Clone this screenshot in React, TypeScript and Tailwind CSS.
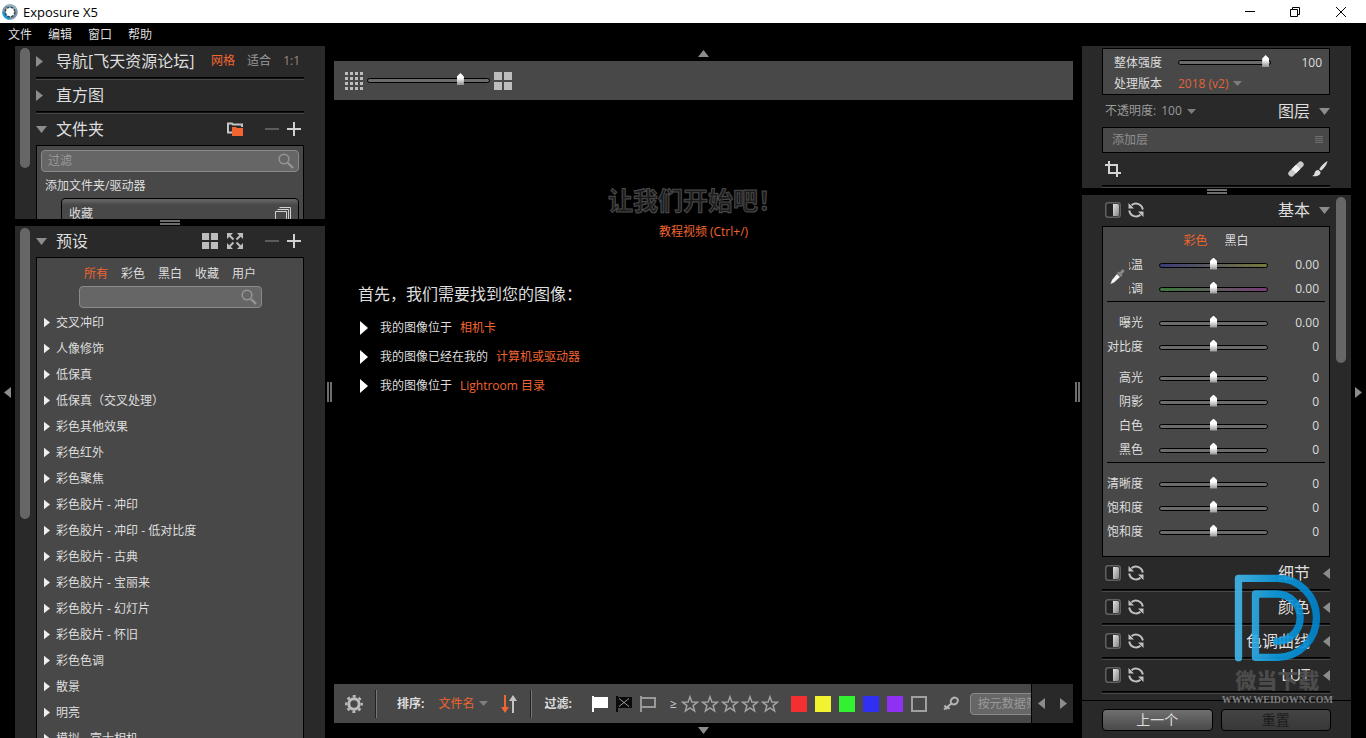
import type { ReactNode } from 'react';

const presets = [
  '交叉冲印',
  '人像修饰',
  '低保真',
  '低保真（交叉处理）',
  '彩色其他效果',
  '彩色红外',
  '彩色聚焦',
  '彩色胶片 - 冲印',
  '彩色胶片 - 冲印 - 低对比度',
  '彩色胶片 - 古典',
  '彩色胶片 - 宝丽来',
  '彩色胶片 - 幻灯片',
  '彩色胶片 - 怀旧',
  '彩色色调',
  '散景',
  '明亮',
  '模拟 - 富士相机',
];

const swatches = [
  { name: '红', color: 'bg-[#f23030]' },
  { name: '黄', color: 'bg-[#f2f230]' },
  { name: '绿', color: 'bg-[#30f230]' },
  { name: '蓝', color: 'bg-[#3030f2]' },
  { name: '紫', color: 'bg-[#9030f2]' },
  { name: '无', color: 'border-2 border-[#a0a0a0]' },
];

const grayTrack = '[&::-webkit-slider-runnable-track]:bg-[#6b6b6b]';

type Tri = 'left' | 'right' | 'up' | 'down';

const triPoints: Record<Tri, string> = {
  left: '7,0 7,11 0,5.5',
  right: '0,0 0,11 7,5.5',
  up: '0,7 11,7 5.5,0',
  down: '0,0 11,0 5.5,7',
};

function Triangle({ dir, className = '' }: { dir: Tri; className?: string }) {
  const flat = dir === 'up' || dir === 'down';
  return (
    <svg
      viewBox={flat ? '0 0 11 7' : '0 0 7 11'}
      className={`shrink-0 fill-[#8c8c8c] ${flat ? 'w-[11px] h-[7px]' : 'w-[7px] h-[11px]'} ${className}`}
    >
      <polygon points={triPoints[dir]} />
    </svg>
  );
}

function Caret() {
  return (
    <svg viewBox="0 0 9 5" className="w-[9px] h-[5px] shrink-0 fill-[#7d7d7d]">
      <polygon points="0,0 9,0 4.5,5" />
    </svg>
  );
}

function Groove() {
  return <div className="h-[3px] shrink-0 border-y border-t-black border-b-[#484848] bg-[#101010]" />;
}

function Slider({ label, value, track = grayTrack, className = '' }: { label: string; value: number; track?: string; className?: string }) {
  return (
    <input
      type="range"
      aria-label={label}
      defaultValue={value}
      className={`appearance-none bg-transparent block h-[13px] shrink-0 [&::-webkit-slider-runnable-track]:h-[5px] [&::-webkit-slider-runnable-track]:rounded-[3px] [&::-webkit-slider-runnable-track]:border [&::-webkit-slider-runnable-track]:border-black [&::-webkit-slider-thumb]:appearance-none [&::-webkit-slider-thumb]:w-[7px] [&::-webkit-slider-thumb]:h-[12px] [&::-webkit-slider-thumb]:-mt-[6px] [&::-webkit-slider-thumb]:bg-linear-to-b [&::-webkit-slider-thumb]:from-white [&::-webkit-slider-thumb]:from-40% [&::-webkit-slider-thumb]:to-[#909090] [&::-webkit-slider-thumb]:[clip-path:polygon(50%_0,100%_30%,100%_100%,0_100%,0_30%)] ${track} ${className}`}
    />
  );
}

function SearchIcon() {
  return (
    <svg viewBox="0 0 16 16" className="w-4 h-4 shrink-0" fill="none" stroke="#959595">
      <circle cx="6" cy="6" r="4.8" strokeWidth="1.5" />
      <path d="M10 10l5 5" strokeWidth="2.4" />
    </svg>
  );
}

function SearchBox({ label, placeholder, className = '' }: { label: string; placeholder?: string; className?: string }) {
  return (
    <div className={`flex items-center h-[22px] pl-[6px] pr-1 rounded border border-[#8a8a8a] bg-[#666] ${className}`}>
      <input
        aria-label={label}
        placeholder={placeholder}
        className="flex-1 min-w-0 bg-transparent outline-none placeholder:text-[#9a9a9a]"
      />
      <SearchIcon />
    </div>
  );
}

function PlusMinus() {
  return (
    <div className="flex items-center gap-2 ml-[22px] mr-[3px]">
      <button aria-label="删除">
        <svg viewBox="0 0 14 14" className="w-[14px] h-[14px]">
          <path d="M0 6h14v2H0z" fill="#5c5c5c" />
        </svg>
      </button>
      <button aria-label="添加">
        <svg viewBox="0 0 14 14" className="w-[14px] h-[14px]">
          <path d="M0 6h6V0h2v6h6v2H8v6H6V8H0z" fill="#d0d0d0" />
        </svg>
      </button>
    </div>
  );
}

function GridIcon({ size }: { size: string }) {
  return (
    <svg viewBox="0 0 18 18" className={size} fill="#bdbdbd">
      <path d="M0 0h8v8H0zM10 0h8v8h-8zM0 10h8v8H0zM10 10h8v8h-8z" />
    </svg>
  );
}

function PanelHeader({ title, open, children }: { title: string; open?: boolean; children?: ReactNode }) {
  return (
    <div className="flex items-center h-[31px] shrink-0 pb-[1px]">
      <span className="w-5 shrink-0">
        <Triangle dir={open ? 'down' : 'right'} />
      </span>
      <h2 className="text-base leading-5 mr-auto">{title}</h2>
      {children}
    </div>
  );
}

function SectionHeader({ title, open }: { title: string; open?: boolean }) {
  return (
    <div className="flex items-center h-[31px] shrink-0 pb-[1px] pl-[3px]">
      <button aria-label="启用" className="mr-[7px]">
        <svg viewBox="0 0 16 16" className="w-4 h-4">
          <defs>
            <linearGradient id="half" x1="0" y1="0" x2="1" y2="1">
              <stop offset="0" stopColor="#e2e2e2" />
              <stop offset="1" stopColor="#858585" />
            </linearGradient>
          </defs>
          <rect x=".75" y=".75" width="14.5" height="14.5" rx="2.5" fill="#222" stroke="#606060" strokeWidth="1.5" />
          <path d="M8 2h4.500a1.500 1.500 0 0 1 1.500 1.500v9a1.500 1.500 0 0 1-1.500 1.500H8z" fill="url(#half)" />
        </svg>
      </button>
      <button aria-label="重置">
        <svg viewBox="0 0 16 16" className="w-4 h-4">
          <g fill="none" stroke="#c2c2c2" strokeWidth="2">
            <path d="M3.500 3.200C7 .2 13.500 1.200 14.800 7.500" />
            <path d="M12.500 12.800C9 15.800 2.500 14.800 1.200 8.500" />
          </g>
          <path d="M.5 1v5.500h5.500zM15.500 15V9.500H10z" fill="#c2c2c2" />
        </svg>
      </button>
      <h2 className="text-base leading-5 ml-auto mr-[9px]">{title}</h2>
      <span className="w-[11px] flex justify-end">
        <Triangle dir={open ? 'down' : 'left'} />
      </span>
    </div>
  );
}

function Adjust({ label, value, track, clipped }: { label: string; value: string; track?: string; clipped?: boolean }) {
  return (
    <div className="flex items-center h-6 pr-[6px]">
      <span className={`flex justify-end overflow-hidden whitespace-nowrap mr-4 ${clipped ? 'w-[14px]' : 'w-9'}`}>{label}</span>
      <Slider label={label} value={50} track={track} className="w-[109px]" />
      <output className="flex-1 text-right">{value}</output>
    </div>
  );
}

function HandleH() {
  return (
    <div className="h-[7px] shrink-0 flex justify-center items-center">
      <div className="w-5 h-[5px] border-y-2 border-[#6e6e6e]" />
    </div>
  );
}

function HandleV() {
  return (
    <div className="w-[9px] shrink-0 flex justify-center items-center">
      <div className="h-5 w-[5px] border-x-2 border-[#6e6e6e]" />
    </div>
  );
}

function TitleBar() {
  return (
    <header className="h-[23px] shrink-0 bg-white text-black flex items-center pl-[2px]">
      <svg viewBox="0 0 16 16" className="w-4 h-4">
        <circle cx="8" cy="8" r="6.300" fill="#fff" stroke="#7d95a3" strokeWidth="3" />
        <path d="M1.700 8A6.300 6.300 0 0 0 8 14.300" fill="none" stroke="#1c9ad6" strokeWidth="3" />
        <path d="M5 2.500A6.300 6.300 0 0 1 14 6" fill="none" stroke="#8fb2c4" strokeWidth="2.500" />
        <circle cx="8" cy="8" r="4.800" fill="none" stroke="#39444c" strokeWidth="1.500" strokeDasharray="2.500 1.270" />
      </svg>
      <h1 className="text-[13px] leading-4 ml-[5px] mr-auto">Exposure X5</h1>
      <div className="flex mr-[1px]">
        <button aria-label="最小化" className="w-[45px] flex justify-center">
          <svg viewBox="0 0 10 10" className="w-[10px] h-[10px]"><path d="M0 4.500h10" stroke="#000" /></svg>
        </button>
        <button aria-label="还原" className="w-[45px] flex justify-center">
          <svg viewBox="0 0 10 10" className="w-[10px] h-[10px]" fill="none" stroke="#000">
            <path d="M.5 2.500h7v7h-7zM2.500 2.500v-2h7v7h-2" />
          </svg>
        </button>
        <button aria-label="关闭" className="w-[48px] flex justify-center">
          <svg viewBox="0 0 10 10" className="w-[10px] h-[10px]" stroke="#000"><path d="M0 0l10 10M10 0L0 10" /></svg>
        </button>
      </div>
    </header>
  );
}

function LeftColumn() {
  return (
    <aside className="w-[310px] shrink-0 flex flex-col">
      <section className="h-[173px] shrink-0 flex bg-[#292929] pl-[5px] overflow-hidden">
        <div className="w-[10px] h-[120px] mt-[2px] rounded-full bg-[#666] shrink-0" />
        <div className="flex-1 ml-[5px] mr-[21px] pl-[1px]">
          <PanelHeader title="导航[飞天资源论坛]">
            <div className="flex gap-3 mr-1">
              <button className="text-[#f26530]">网格</button>
              <button className="text-[#9a9a9a]">适合</button>
              <button className="text-[#9a8a78]">1:1</button>
            </div>
          </PanelHeader>
          <Groove />
          <PanelHeader title="直方图" />
          <Groove />
          <PanelHeader title="文件夹" open>
            <button aria-label="文件夹视图">
              <svg viewBox="0 0 16 14" className="w-4 h-[14px]">
                <path d="M5 10.500H1V1.500h4l1 1h9V5" fill="none" stroke="#c4c4c4" strokeWidth="2" />
                <path d="M5 5h4l1 1h6v8H5z" fill="#f26530" />
              </svg>
            </button>
            <PlusMinus />
          </PanelHeader>
          <div className="border border-black border-b-0 bg-[#484848] pt-1 px-1 h-[120px]">
            <SearchBox label="过滤文件夹" placeholder="过滤" />
            <button className="block mt-1 ml-1 h-[18px] leading-5">添加文件夹/驱动器</button>
            <button className="flex items-center justify-between ml-5 mt-1 h-8 w-[238px] pl-[7px] pr-[6px] rounded-t border border-black bg-linear-to-b from-[#626262] from-5% to-[#484848] to-20%">
              收藏
              <svg viewBox="0 0 17 17" className="w-[17px] h-[17px]" fill="none" stroke="#d0d0d0">
                <path d="M.5 5.500h11v11H.5zM2.500 3.500h11v12M4.500 1.500h11v12" />
              </svg>
            </button>
          </div>
        </div>
      </section>
      <HandleH />
      <section className="flex-1 min-h-0 flex bg-[#292929] pl-[5px] overflow-hidden">
        <div className="w-[10px] h-[291px] mt-[2px] rounded-full bg-[#666] shrink-0" />
        <div className="flex-1 min-h-0 flex flex-col ml-[5px] mr-[21px] pl-[1px]">
          <PanelHeader title="预设" open>
            <button aria-label="网格视图" className="mr-[9px]"><GridIcon size="w-4 h-4" /></button>
            <button aria-label="展开">
              <svg viewBox="0 0 16 16" className="w-4 h-4" fill="#bdbdbd">
                <path d="M0 0h6L0 6zM16 0v6L10 0zM0 16v-6l6 6zM16 16h-6l6-6z" />
                <path d="M2 2l4.500 4.500M14 2L9.500 6.500M2 14l4.500-4.500M14 14L9.500 9.500" stroke="#bdbdbd" strokeWidth="2" />
              </svg>
            </button>
            <PlusMinus />
          </PanelHeader>
          <div className="flex-1 min-h-0 border border-black border-b-0 bg-[#484848] pt-[6px] overflow-hidden">
            <div className="flex justify-center gap-[13px] h-[22px] leading-5">
              <button className="h-5 text-[#f26530]">所有</button>
              <button className="h-5">彩色</button>
              <button className="h-5">黑白</button>
              <button className="h-5">收藏</button>
              <button className="h-5">用户</button>
            </div>
            <SearchBox label="搜索预设" className="w-[183px] mx-auto mb-[1px]" />
            <ul>
              {presets.map((name) => (
                <li key={name} className="flex items-center h-[26px] pl-[7px] leading-[18px]">
                  <Triangle dir="right" className="fill-[#eee]! w-[6px]! mr-[6px]" />
                  <span className="pt-[2px]">{name}</span>
                </li>
              ))}
            </ul>
          </div>
        </div>
      </section>
    </aside>
  );
}

function StartLink({ text, link }: { text: string; link: string }) {
  return (
    <p className="flex items-center h-[29px] pl-[2px]">
      <svg viewBox="0 0 8 14" className="w-2 h-[14px] mr-3 fill-white"><polygon points="0,0 8,7 0,14" /></svg>
      {text}
      <a href="#" className="text-[#f26530] ml-2">{link}</a>
    </p>
  );
}

function BottomBar() {
  return (
    <div className="flex items-center h-[39px] shrink-0 bg-[#484848] pl-[11px]">
      <button aria-label="设置">
        <svg viewBox="0 0 18 18" className="w-[18px] h-[18px]" fill="none" stroke="#bdbdbd">
          <circle cx="9" cy="9" r="5.200" strokeWidth="3" />
          <circle cx="9" cy="9" r="7.800" strokeWidth="2.200" strokeDasharray="3 3.126" strokeDashoffset="1.500" />
        </svg>
      </button>
      <div className="w-[2px] h-7 ml-3 border-l border-l-[#222] bg-[#777]" />
      <span className="font-bold ml-5">排序:</span>
      <button className="flex items-center gap-[5px] text-[#f26530] ml-[14px]">
        文件名
        <Caret />
      </button>
      <button aria-label="排序方向" className="ml-[13px]">
        <svg viewBox="0 0 16 18" className="w-4 h-[18px]">
          <path d="M3 0h2v12h3l-4 6-4-6h3z" fill="#f26530" />
          <path d="M11 18h2V6h3l-4-6-4 6h3z" fill="#c4c4c4" />
        </svg>
      </button>
      <div className="w-[2px] h-7 ml-[13px] border-l border-l-[#222] bg-[#777]" />
      <span className="font-bold ml-3">过滤:</span>
      <div className="flex gap-2 ml-5">
        <button aria-label="已选取">
          <svg viewBox="0 0 16 16" className="w-4 h-4 fill-white"><path d="M0 0h2v1h14v11H2v4H0z" /></svg>
        </button>
        <button aria-label="已排除">
          <svg viewBox="0 0 16 16" className="w-4 h-4">
            <path d="M0 0h2v1h14v11H2v4H0z" fill="#0a0a0a" />
            <path d="M3 2.500l10 8M13 2.500l-10 8" stroke="#999" />
          </svg>
        </button>
        <button aria-label="无旗标">
          <svg viewBox="0 0 16 16" className="w-4 h-4" fill="none" stroke="#999" strokeWidth="2">
            <path d="M1 0v16M1 2h14v9H1" />
          </svg>
        </button>
      </div>
      <button className="ml-[14px]">≥</button>
      <div className="flex gap-[2px] ml-[4px]">
        {[1, 2, 3, 4, 5].map((n) => (
          <button key={n} aria-label={`${n} 星`}>
            <svg viewBox="0 0 18 18" className="w-[18px] h-[18px]" fill="none" stroke="#a2a2a2" strokeWidth="1.500">
              <path d="M9 1.800l1.900 5.200 5.600.2-4.400 3.400 1.500 5.400L9 12.900 4.400 16l1.500-5.400L1.500 7.200l5.600-.2z" />
            </svg>
          </button>
        ))}
      </div>
      <div className="flex gap-2 ml-3">
        {swatches.map(({ name, color }) => (
          <button key={name} aria-label={name} className={`w-4 h-4 ${color}`} />
        ))}
      </div>
      <button aria-label="关键字" className="ml-4">
        <svg viewBox="0 0 16 16" className="w-4 h-4" fill="none" stroke="#b4b4b4">
          <ellipse cx="11.300" cy="5" rx="3.700" ry="3.200" transform="rotate(-35 11.300 5)" strokeWidth="2" />
          <path d="M8.500 7.500L1 13.500M4.500 10.500l2 2.500M1.500 9.500l3 3.500" strokeWidth="2" />
        </svg>
      </button>
      <div className="flex-1 min-w-0 overflow-hidden ml-[11px]">
        <input
          aria-label="元数据筛选"
          placeholder="按元数据筛选"
          className="block w-[160px] h-[22px] px-[7px] rounded border border-[#8a8a8a] bg-[#666] outline-none placeholder:text-[#9a9a9a]"
        />
      </div>
      <div className="flex self-stretch items-center justify-between w-[42px] shrink-0 px-[6px] border-l border-black bg-[#292929]">
        <button aria-label="向左"><Triangle dir="left" /></button>
        <button aria-label="向右"><Triangle dir="right" /></button>
      </div>
    </div>
  );
}

function Center() {
  return (
    <main className="flex-1 min-w-0 flex flex-col">
      <div className="h-[15px] shrink-0 flex items-center justify-center"><Triangle dir="up" /></div>
      <div className="flex items-center h-[39px] shrink-0 bg-[#484848] pl-[11px] gap-1">
        <svg viewBox="0 0 18 18" className="w-[18px] h-[18px] shrink-0">
          <path d="M0 1.500h18M0 6.500h18M0 11.500h18M0 16.500h18" stroke="#bdbdbd" strokeWidth="3" strokeDasharray="3 2" />
        </svg>
        <Slider label="缩略图大小" value={78} className="w-[123px]" />
        <GridIcon size="w-[18px] h-[18px]" />
      </div>
      <div className="flex-1 min-h-0 overflow-hidden pt-[84px]">
        <div className="text-center">
          <h2 className="text-[25px] leading-8 font-bold pr-4 text-[#1c1c1c] [-webkit-text-stroke:1px_#4c4c4c]">让我们开始吧！</h2>
          <a href="#" className="inline-block mt-[6px] leading-5 text-[#f26530]">教程视频 (Ctrl+/)</a>
        </div>
        <div className="pl-6 mt-[42px]">
          <h3 className="text-base leading-5 mb-[9px]">首先，我们需要找到您的图像：</h3>
          <StartLink text="我的图像位于" link="相机卡" />
          <StartLink text="我的图像已经在我的" link="计算机或驱动器" />
          <StartLink text="我的图像位于" link="Lightroom 目录" />
        </div>
      </div>
      <BottomBar />
      <div className="h-[15px] shrink-0 flex items-center justify-center"><Triangle dir="down" /></div>
    </main>
  );
}

function Watermark() {
  return (
    <div className="absolute right-[18px] bottom-[32px] flex flex-col items-center pointer-events-none opacity-90">
      <svg viewBox="504 68 260 264" className="w-[87px] h-[88px]" fill="none">
        <defs>
          <linearGradient id="mark" x1="0" y1="0" x2="1" y2="0">
            <stop offset="0" stopColor="#42b8ee" />
            <stop offset=".5" stopColor="#0c9be0" />
            <stop offset="1" stopColor="#0086d0" />
          </linearGradient>
        </defs>
        <path
          d="M517 319V81H634A117 118.500 0 0 1 634 318H568V128H632A70 71 0 0 1 632 270"
          stroke="url(#mark)"
          strokeWidth="22"
          strokeLinecap="round"
          strokeLinejoin="round"
        />
      </svg>
      <span className="text-[21px] leading-7 mt-[4px] font-black text-[#505050]">微当下载</span>
      <span className="text-[10px] leading-3 font-bold text-[#8a8a8a] font-['Liberation_Serif',serif]">WWW.WEIDOWN.COM</span>
    </div>
  );
}

function RightColumn() {
  return (
    <aside className="relative w-[269px] shrink-0 flex flex-col">
      <section className="h-[142px] shrink-0 bg-[#292929] pl-5 pr-[21px] pt-[2px] overflow-hidden">
        <div className="border border-black bg-[#484848] h-[47px] pl-[11px] pr-[7px] pt-[3px] flex flex-col">
          <div className="flex items-center h-[22px]">
            <span className="w-16">整体强度</span>
            <Slider label="整体强度" value={99} className="w-[93px]" />
            <output className="flex-1 text-right">100</output>
          </div>
          <label className="flex items-center h-[22px]">
            <span className="w-16">处理版本</span>
            <select className="appearance-none bg-transparent text-[#e0633a] outline-none mr-1 field-sizing-content">
              <option>2018 (v2)</option>
            </select>
            <Caret />
          </label>
        </div>
        <div className="flex items-center h-8 pl-[3px] text-[#9a9a9a]">
          不透明度:
          <button className="flex items-center gap-[5px] ml-[5px]">100 <Caret /></button>
          <h2 className="text-base leading-5 ml-auto mr-[9px] text-[#dedede]">图层</h2>
          <Triangle dir="down" />
        </div>
        <div className="flex items-center justify-between h-[26px] border border-black bg-[#484848] pl-[9px] pr-[6px] text-[#8f8f8f]">
          添加层
          <svg viewBox="0 0 8 8" className="w-2 h-2" stroke="#6f6f6f"><path d="M0 .5h8M0 2.500h8M0 4.500h8M0 6.500h8" /></svg>
        </div>
        <div className="flex items-center h-[32px] pl-[3px] pr-[2px]">
          <button aria-label="裁剪">
            <svg viewBox="0 0 16 16" className="w-4 h-4" fill="none" stroke="#d4d4d4" strokeWidth="2">
              <path d="M4 0v12h12M0 4h12v12" />
            </svg>
          </button>
          <button aria-label="修复" className="ml-auto mr-2">
            <svg viewBox="0 0 16 16" className="w-4 h-4">
              <rect x="-1.500" y="5" width="19" height="6" rx="2.800" fill="#c9c9c9" transform="rotate(-45 8 8)" />
              <rect x="5" y="5" width="6" height="6" fill="#f2f2f2" transform="rotate(-45 8 8)" />
            </svg>
          </button>
          <button aria-label="画笔">
            <svg viewBox="0 0 16 16" className="w-4 h-4" fill="#dcdcdc">
              <path d="M15.500 0C12.500 1.500 9 5 7.200 8.200l1.800 1.600C12 7.500 15 3.500 15.500 0z" />
              <path d="M6.500 9l2 2c.2 3-3 5-8.500 4 2-.6 2.200-1.600 2.600-3C3 10 4.800 8.800 6.500 9z" />
            </svg>
          </button>
        </div>
        <Groove />
      </section>
      <HandleH />
      <div className="flex-1 min-h-0 flex bg-[#292929] overflow-hidden">
        <div className="flex-1 pl-5 pr-[1px]">
          <SectionHeader title="基本" open />
          <div className="border border-black bg-[#484848] px-1 pb-[12px]">
            <div className="flex justify-center gap-[17px] h-[26px] leading-7">
              <button className="text-[#f26530]">彩色</button>
              <button>黑白</button>
            </div>
            <div className="flex items-center border-b border-black">
              <button aria-label="白平衡吸管" className="w-[22px] shrink-0 pl-[2px]">
                <svg viewBox="0 0 16 16" className="w-4 h-4">
                  <path d="M9.500 2.500l1.500 1C12 1 14 0 15 1s0 3-2.500 4l1 1.500-1.500 1.500L8 4z" fill="#8a8a8a" />
                  <path d="M8 5l3 3-6 5.500L1.500 15 3 11z" fill="#f4f4f4" />
                </svg>
              </button>
              <div className="flex-1">
                <Adjust label="色温" value="0.00" clipped track="[&::-webkit-slider-runnable-track]:bg-[linear-gradient(90deg,#3c3c78,#5c5c5c_50%,#78783c)]" />
                <Adjust label="色调" value="0.00" clipped track="[&::-webkit-slider-runnable-track]:bg-[linear-gradient(90deg,#3c783c,#5c5c5c_50%,#783c78)]" />
              </div>
            </div>
            <div className="pt-[9px] pb-[7px]">
              <Adjust label="曝光" value="0.00" />
              <Adjust label="对比度" value="0" />
            </div>
            <div className="border-b border-black">
              <Adjust label="高光" value="0" />
              <Adjust label="阴影" value="0" />
              <Adjust label="白色" value="0" />
              <Adjust label="黑色" value="0" />
            </div>
            <div className="pt-[9px]">
              <Adjust label="清晰度" value="0" />
              <Adjust label="饱和度" value="0" />
              <Adjust label="饱和度" value="0" />
            </div>
          </div>
          <div className="pt-[1px]">
            {['细节', '颜色', '色调曲线', 'LUT'].map((title) => (
              <div key={title}>
                <SectionHeader title={title} />
                <Groove />
              </div>
            ))}
          </div>
        </div>
        <div className="w-5 shrink-0 pt-[2px] pl-[5px]">
          <div className="w-[10px] h-[166px] rounded-full bg-[#666]" />
        </div>
      </div>
      <footer className="flex gap-2 shrink-0 h-[38px] pt-2 px-5 border-t border-black bg-[#292929] text-sm leading-none">
        <button className="flex-1 h-[22px] rounded border border-black bg-linear-to-b from-[#707070] to-[#4a4a4a]">上一个</button>
        <button disabled className="flex-1 h-[22px] rounded border border-black bg-linear-to-b from-[#444] to-[#383838] text-[#1c1c1c]">重置</button>
      </footer>
      <Watermark />
    </aside>
  );
}

export default function App() {
  return (
    <div className="h-screen flex flex-col overflow-hidden bg-black text-[#dedede] text-xs font-['Open_Sans','Noto_Sans_CJK_SC',sans-serif]">
      <TitleBar />
      <nav className="h-[23px] shrink-0 flex items-center gap-4 px-2 pt-[1px]">
        <button>文件</button>
        <button>编辑</button>
        <button>窗口</button>
        <button>帮助</button>
      </nav>
      <div className="flex-1 min-h-0 flex">
        <div className="w-[15px] shrink-0 flex items-center justify-center"><Triangle dir="left" /></div>
        <LeftColumn />
        <HandleV />
        <Center />
        <HandleV />
        <RightColumn />
        <div className="w-[15px] shrink-0 flex items-center justify-center"><Triangle dir="right" /></div>
      </div>
    </div>
  );
}
